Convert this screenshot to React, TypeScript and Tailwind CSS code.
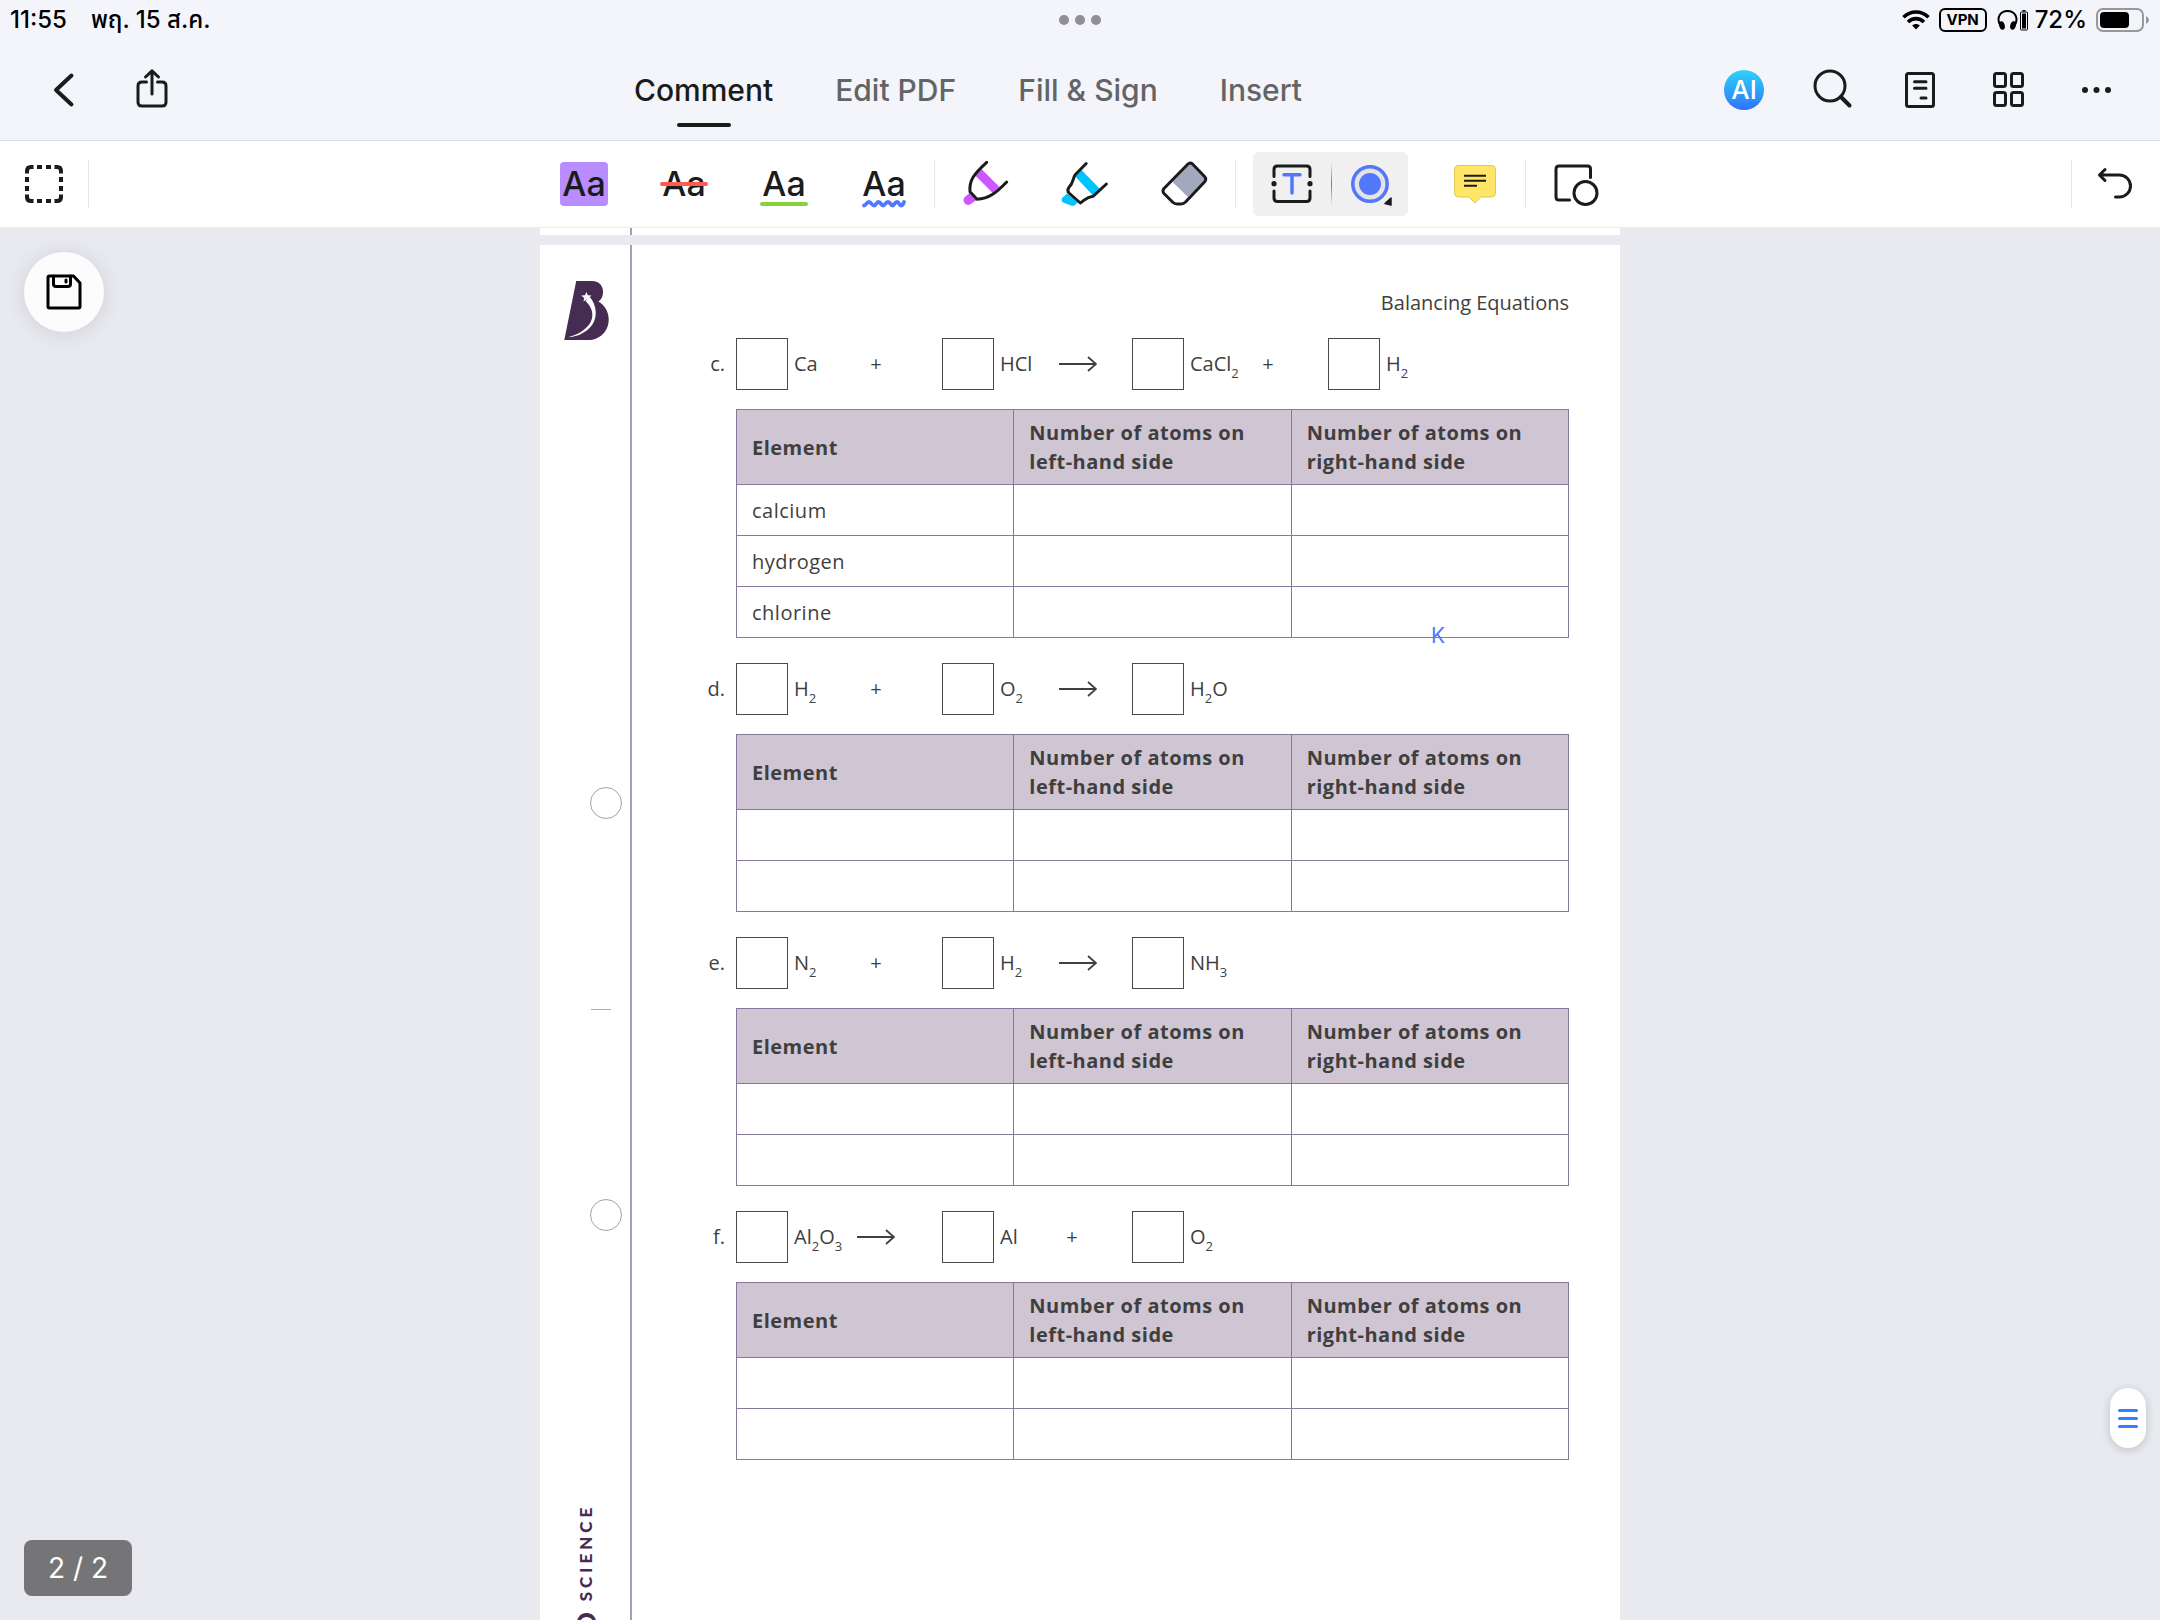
import type { ReactNode } from "react";

const INK = "#1a1c1c";

function Icon({ children, width = 3 }: { children: ReactNode; width?: number }) {
  return (
    <svg
      viewBox="0 0 48 48"
      className="size-12 shrink-0"
      fill="none"
      stroke={INK}
      strokeWidth={width}
      strokeLinecap="round"
      strokeLinejoin="round"
      aria-hidden="true"
    >
      {children}
    </svg>
  );
}

function HeaderButton({ label, children }: { label: string; children: ReactNode }) {
  return (
    <button type="button" aria-label={label} className="flex h-12 w-22 items-center justify-center">
      {children}
    </button>
  );
}

function ToolButton({ label, children }: { label: string; children: ReactNode }) {
  return (
    <button type="button" aria-label={label} className="flex h-16 w-25 items-center justify-center">
      {children}
    </button>
  );
}

function Divider() {
  return <span className="h-12 w-px bg-[#e8e8ea]" />;
}

function StatusBar() {
  return (
    <div className="grid h-10 grid-cols-3 items-center px-[10px] text-[24px] leading-7 font-medium text-black">
      <div className="flex gap-6">
        <span>11:55</span>
        <span>พฤ. 15 ส.ค.</span>
      </div>
      <div className="flex justify-center gap-[6px]">
        <span className="size-[10px] rounded-full bg-[#8e8e93]" />
        <span className="size-[10px] rounded-full bg-[#8e8e93]" />
        <span className="size-[10px] rounded-full bg-[#8e8e93]" />
      </div>
      <div className="flex items-center justify-end">
        <svg viewBox="0 0 28 20" className="h-5 w-7" fill="none" stroke="#000" strokeWidth="3.6" aria-hidden="true">
          <path d="M1.5 7.2C8.5 .2 19.5 .2 26.5 7.2" />
          <path d="M6 12C10.500 7.500 17.500 7.500 22 12" />
          <path d="M14 19.500L10.200 15.600C12.300 13.600 15.700 13.600 17.800 15.600Z" fill="#000" stroke="none" />
        </svg>
        <span className="ml-[9px] flex h-6 w-12 items-center justify-center rounded-[6px] border-2 border-black text-[15px] leading-5 font-bold">
          VPN
        </span>
        <svg viewBox="0 0 32 24" className="ml-[10px] h-6 w-8" aria-hidden="true">
          <path d="M4 19C-2 9 4 3 10.500 3S23 9 17 19" fill="none" stroke="#000" strokeWidth="2" />
          <ellipse cx="5" cy="17.500" rx="2.700" ry="4.300" fill="#000" transform="rotate(-15 5 17.500)" />
          <ellipse cx="16" cy="17.500" rx="2.700" ry="4.300" fill="#000" transform="rotate(15 16 17.500)" />
          <rect x="23.500" y="4" width="7" height="18" rx=".8" fill="none" stroke="#000" />
          <rect x="25" y="5.500" width="4" height="15" fill="#000" />
          <rect x="25.500" y="2" width="3" height="1.500" fill="#000" />
        </svg>
        <span className="ml-[6px]">72%</span>
        <svg viewBox="0 0 54 24" className="ml-[9px] h-6 w-[54px]" aria-hidden="true">
          <rect x="1" y="1" width="46" height="22" rx="6" fill="none" stroke="#97989c" strokeWidth="2" />
          <rect x="4" y="4" width="29" height="16" rx="4" fill="#000" />
          <path d="M50 8Q53 9.500 53 12T50 16Z" fill="#97989c" />
        </svg>
      </div>
    </div>
  );
}

function Tab({ label, active = false }: { label: string; active?: boolean }) {
  return (
    <button
      type="button"
      role="tab"
      aria-selected={active}
      className={
        active
          ? "relative text-[30px] leading-10 font-medium text-[#1a1c1c]"
          : "relative text-[30px] leading-10 font-medium text-[#636466]"
      }
    >
      {label}
      {active && <span className="absolute top-[53px] left-1/2 h-1 w-[54px] -translate-x-1/2 rounded-full bg-[#1a1c1c]" />}
    </button>
  );
}

function HeaderBar() {
  return (
    <div className="grid h-25 grid-cols-[1fr_auto_1fr] items-center px-5">
      <div className="flex">
        <HeaderButton label="Back">
          <Icon width={4}>
            <path d="M31.500 9.500L16 24L31.500 38.500" />
          </Icon>
        </HeaderButton>
        <HeaderButton label="Share">
          <Icon>
            <path d="M24 28V5.500M17.500 11L24 4.800L30.500 11" />
            <path d="M18.500 16H14Q10 16 10 20V36Q10 40 14 40H34Q38 40 38 36V20Q38 16 34 16H29.500" />
          </Icon>
        </HeaderButton>
      </div>
      <div role="tablist" className="mr-[224px] flex gap-[62px]">
        <Tab label="Comment" active />
        <Tab label="Edit PDF" />
        <Tab label="Fill &amp; Sign" />
        <Tab label="Insert" />
      </div>
      <div className="flex justify-end">
        <HeaderButton label="AI assistant">
          <span className="flex size-10 items-center justify-center rounded-full bg-linear-to-b from-[#30d2f8] to-[#3272f8] text-[26px] leading-8 font-medium text-white">
            AI
          </span>
        </HeaderButton>
        <HeaderButton label="Search">
          <Icon>
            <circle cx="22" cy="20" r="15" />
            <path d="M33 31L41.500 39.500" strokeWidth="4" />
          </Icon>
        </HeaderButton>
        <HeaderButton label="Page view">
          <Icon>
            <rect x="10.500" y="7.500" width="27" height="33" rx="2" />
            <path d="M18.500 15.800H30M18.500 22.200H30M25 32H30" />
          </Icon>
        </HeaderButton>
        <HeaderButton label="Thumbnails">
          <Icon>
            <rect x="10.500" y="7.500" width="11" height="13" rx="2" />
            <rect x="27.500" y="7.500" width="11" height="13" rx="2" />
            <rect x="10.500" y="26.500" width="11" height="13" rx="2" />
            <rect x="27.500" y="26.500" width="11" height="13" rx="2" />
          </Icon>
        </HeaderButton>
        <HeaderButton label="More">
          <Icon>
            <g fill={INK} stroke="none">
              <circle cx="13" cy="24" r="3" />
              <circle cx="24.500" cy="24" r="3" />
              <circle cx="36" cy="24" r="3" />
            </g>
          </Icon>
        </HeaderButton>
      </div>
    </div>
  );
}

function Toolbar() {
  return (
    <div className="grid h-[87px] grid-cols-[1fr_auto_1fr] items-center border-b border-[#e9eaef] bg-white text-[#1a1c1c]">
      <div className="flex items-center">
        <button type="button" aria-label="Select area" className="flex h-16 w-22 items-center justify-center">
          <Icon width={4}>
            <g strokeLinecap="butt">
              <path d="M13.500 7H11Q7 7 7 11V13.500M34.500 7H37Q41 7 41 11V13.500M7 34.500V37Q7 41 11 41H13.500M41 34.500V37Q41 41 37 41H34.500" />
              <path d="M17 7H22M26 7H31M17 41H22M26 41H31M7 17V22M7 26V31M41 17V22M41 26V31" />
            </g>
          </Icon>
        </button>
        <Divider />
      </div>

      <div className="flex items-center">
        <ToolButton label="Highlight text">
          <span className="flex h-11 w-12 items-center justify-center rounded-[4px] bg-[#b98cff] text-[34px] leading-10 font-medium">
            Aa
          </span>
        </ToolButton>
        <ToolButton label="Strikethrough text">
          <span className="relative flex h-11 w-12 items-center justify-center text-[34px] leading-10 font-medium">
            Aa
            <span className="absolute top-[20px] left-0 h-1 w-12 rounded-full bg-[#ff5b50]" />
          </span>
        </ToolButton>
        <ToolButton label="Underline text">
          <span className="relative flex h-11 w-12 items-center justify-center text-[34px] leading-10 font-medium">
            Aa
            <span className="absolute bottom-0 left-0 h-1 w-12 rounded-full bg-[#86d13f]" />
          </span>
        </ToolButton>
        <ToolButton label="Squiggly underline text">
          <span className="relative flex h-11 w-12 items-center justify-center text-[34px] leading-10 font-medium">
            Aa
            <svg viewBox="0 0 44 8" className="absolute -bottom-[2px] left-[2px] h-2 w-11" fill="none" aria-hidden="true">
              <path
                d="M2 5.500C4 5.500 4.500 2 7 2S9.500 5.500 12 5.500S14 2 16.500 2S19 5.500 21 5.500S23.500 2 26 2S28.500 5.500 30.500 5.500S32.500 2 35 2S37 5.500 39 5.500S41.500 3 42 2"
                stroke="#5377fa"
                strokeWidth="3.800"
                strokeLinecap="round"
              />
            </svg>
          </span>
        </ToolButton>
        <Divider />
        <ToolButton label="Pencil">
          <Icon>
            <path d="M20.500 9L14.300 15.500L31.700 33L38.500 27Z" fill="#cf57ff" stroke="none" />
            <path d="M8.500 33L3.800 37A4.600 4.600 0 0 0 10.500 43.500L15.500 40Z" fill="#cf57ff" stroke="none" />
            <path d="M25.700 2.300C13 14 8 20 9 31.700L16 39.200C28 39 36 32 45.700 22" />
          </Icon>
        </ToolButton>
        <ToolButton label="Marker">
          <Icon>
            <path d="M20.500 10L14.300 16.500L32 35.500L39 29Z" fill="#00c4ff" stroke="none" />
            <path d="M6 33.500L1 38Q0 41.500 2 42.500L11.500 46Q14 46 16.500 42.500Z" fill="#00c4ff" stroke="none" />
            <path d="M25.200 3.500L14 15C11.500 19 13 22 7.500 28Q6 31 8 33L19.300 43C24 40 25 37 32 36.300L45.400 24" />
          </Icon>
        </ToolButton>
        <ToolButton label="Eraser">
          <Icon>
            <path d="M29 3.500L45 19.500L27 37L11.500 22Z" fill="#a3a9bd" stroke="none" />
            <path d="M27 4Q29 2 31.500 4L43.500 16.500Q46 19 43.500 22L24.500 42Q22.500 44 20 44H16Q13.500 44 11.500 42L3 33.500Q1 31 3 28.500Z" />
          </Icon>
        </ToolButton>
        <Divider />
        <div className="mx-[17px] flex h-16 items-center rounded-[6px] bg-[#f0f0f1]">
          <button type="button" aria-label="Text box" aria-pressed="true" className="flex h-16 w-[78px] items-center justify-center">
            <Icon>
              <path d="M6 16.500V9.500Q6 6 9.500 6H38.500Q42 6 42 9.500V16.500M6 31V38Q6 41.500 9.500 41.500H38.500Q42 41.500 42 38V31" />
              <circle cx="6" cy="23.700" r="2.600" fill={INK} stroke="none" />
              <circle cx="42" cy="23.700" r="2.600" fill={INK} stroke="none" />
              <path d="M16 14.700H32M24 14.700V33" stroke="#5377fa" strokeWidth="3.500" />
            </Icon>
          </button>
          <span className="h-11 w-px bg-linear-to-b from-transparent via-[#5377fa] to-transparent" />
          <button type="button" aria-label="Text colour" className="flex h-16 w-[76px] items-center justify-center">
            <Icon>
              <circle cx="24" cy="24" r="17.200" fill="#e4e4e6" stroke="#5377fa" strokeWidth="3.500" />
              <circle cx="24" cy="24" r="11" fill="#5377fa" stroke="none" />
              <path d="M45 38L39 43.500L45 45Z" fill={INK} strokeWidth="1.500" />
            </Icon>
          </button>
        </div>
        <ToolButton label="Note">
          <Icon>
            <path
              d="M7.500 5.500H40.500Q44.500 5.500 44.500 9.500V33Q44.500 37 40.500 37H30L24 43L18 37H7.500Q3.500 37 3.500 33V9.500Q3.500 5.500 7.500 5.500Z"
              fill="#ffe666"
              stroke="#ddc95a"
              strokeWidth="1"
            />
            <path d="M13 15.800H35M13 20.800H35M13 25.800H26" strokeWidth="2" strokeLinecap="butt" />
          </Icon>
        </ToolButton>
        <Divider />
        <ToolButton label="Shapes">
          <Icon>
            <path d="M38.500 17.500V9Q38.500 6 35.500 6H7Q4 6 4 9V37Q4 40 7 40H17.500" />
            <circle cx="33.500" cy="33" r="11.500" />
          </Icon>
        </ToolButton>
      </div>

      <div className="flex items-center justify-end">
        <Divider />
        <button type="button" aria-label="Undo" className="flex h-16 w-22 items-center justify-center">
          <Icon>
            <path d="M13 9.500L7.500 15L13 20.500M8 15H27.500A11 11 0 0 1 27.500 37H23.500" />
          </Icon>
        </button>
      </div>
    </div>
  );
}

function Arrow() {
  return (
    <svg viewBox="0 0 38 16" className="h-4 w-[38px]" fill="none" stroke="#3f3f3f" strokeWidth="1.800" aria-label="yields">
      <path d="M0 8H36.500M29 1L37 8L29 15" />
    </svg>
  );
}

type Term = { formula: ReactNode; formulaWidth?: string; op?: "+" | "arrow"; opWidth?: string };
type Question = { label: string; terms: Term[]; rows: string[] };

const WIDE = "w-[63px]";
const NARROW = "w-[59px]";

function Sub({ children }: { children: ReactNode }) {
  return <span className="relative top-[7px] text-[13px] leading-4">{children}</span>;
}

const questions: Question[] = [
  {
    label: "c.",
    terms: [
      { formula: "Ca", formulaWidth: WIDE, op: "+" },
      { formula: "HCl", op: "arrow" },
      { formula: <>CaCl<Sub>2</Sub></>, op: "+" },
      { formula: <>H<Sub>2</Sub></> },
    ],
    rows: ["calcium", "hydrogen", "chlorine"],
  },
  {
    label: "d.",
    terms: [
      { formula: <>H<Sub>2</Sub></>, formulaWidth: WIDE, op: "+" },
      { formula: <>O<Sub>2</Sub></>, op: "arrow" },
      { formula: <>H<Sub>2</Sub>O</> },
    ],
    rows: ["", ""],
  },
  {
    label: "e.",
    terms: [
      { formula: <>N<Sub>2</Sub></>, formulaWidth: WIDE, op: "+" },
      { formula: <>H<Sub>2</Sub></>, op: "arrow" },
      { formula: <>NH<Sub>3</Sub></> },
    ],
    rows: ["", ""],
  },
  {
    label: "f.",
    terms: [
      { formula: <>Al<Sub>2</Sub>O<Sub>3</Sub></>, formulaWidth: WIDE, op: "arrow" },
      { formula: "Al", op: "+", opWidth: "w-[26px]" },
      { formula: <>O<Sub>2</Sub></> },
    ],
    rows: ["", ""],
  },
];

function Equation({ label, terms }: { label: string; terms: Term[] }) {
  return (
    <div className="flex h-13 items-center">
      <span className="w-26 pr-[11px] text-right">{label}</span>
      <div className="grid grid-cols-[206px_190px_196px_auto]">
        {terms.map((term, i) => (
          <div key={i} className="flex items-center">
            <span className="size-13 border border-[#4a4a4a]" />
            <span className={`ml-[6px] whitespace-nowrap ${term.formulaWidth ?? NARROW}`}>{term.formula}</span>
            {term.op && (
              <span className={`flex justify-center ${term.opWidth ?? "w-[38px]"}`}>
                {term.op === "+" ? "+" : <Arrow />}
              </span>
            )}
          </div>
        ))}
      </div>
    </div>
  );
}

function AtomTable({ rows }: { rows: string[] }) {
  const head = "h-[75px] border border-[#85789a] pl-[15px] text-left align-middle font-bold";
  const cell = "h-[51px] border border-[#85789a] pl-[15px]";
  return (
    <div className="pl-26">
      <table className="w-full table-fixed border-collapse text-[20px] leading-[29px] tracking-wide">
        <thead className="bg-[#d0c5d3]">
          <tr>
            <th className={head}>Element</th>
            <th className={head}>
              Number of atoms on
              <br />
              left-hand side
            </th>
            <th className={head}>
              Number of atoms on
              <br />
              right-hand side
            </th>
          </tr>
        </thead>
        <tbody>
          {rows.map((name, i) => (
            <tr key={i}>
              <td className={cell}>{name}</td>
              <td className={cell} />
              <td className={cell} />
            </tr>
          ))}
        </tbody>
      </table>
    </div>
  );
}

function Logo() {
  return (
    <svg viewBox="0 0 134 178" className="ml-6 h-[59px] w-[45px]" aria-label="Beyond">
      <path
        d="M36 0H84C104 0 117 14 117 33C117 47 111 56 103 62C122 73 134 93 134 116C134 151 108 178 72 178H0Z"
        fill="#462b53"
      />
      <path d="M64 60C88 82 96 116 62 145C50 155 34 164 12 170C38 168 60 158 76 142C106 112 96 70 77 48Z" fill="#fff" />
      <path d="M67 33L71 43L82 44L74 51L77 62L67 56L58 62L60 51L51 44L62 43Z" fill="#fff" />
    </svg>
  );
}

function Margin() {
  return (
    <div className="flex w-[90px] shrink-0 flex-col pt-9">
      <Logo />
      <span className="mt-[447px] ml-[50px] size-8 rounded-full border border-[#a3a3a3]" />
      <span className="mt-[190px] ml-[51px] h-px w-5 bg-[#b5a9bc]" />
      <span className="mt-[189px] ml-[50px] size-8 rounded-full border border-[#a3a3a3]" />
      <div className="mt-[273px] ml-[30px] flex w-8 rotate-180 items-center gap-2 font-['Lato'] leading-8 font-black text-[#462b53] [writing-mode:vertical-rl]">
        <span className="text-[26px] tracking-widest">BEYOND</span>
        <span className="text-[17px] tracking-[4px]">SCIENCE</span>
      </div>
    </div>
  );
}

function Worksheet() {
  return (
    <article className="relative mt-[10px] flex w-1/2 shrink-0 bg-white font-['Open_Sans','Noto_Sans',sans-serif] text-[20px] leading-7 text-[#3f3f3f]">
      <Margin />
      <div className="flex-1 border-l-2 border-[#a99db6] pt-11 pr-[51px]">
        <h1 className="mb-[21px] text-right">Balancing Equations</h1>
        <div className="flex flex-col gap-[25px]">
          {questions.map((q) => (
            <section key={q.label} className="flex flex-col gap-[19px]">
              <Equation label={q.label} terms={q.terms} />
              <AtomTable rows={q.rows} />
            </section>
          ))}
        </div>
      </div>
      <span className="absolute top-[377px] left-[891px] font-['Inter'] text-[21px] leading-7 text-[#5377fa]">K</span>
    </article>
  );
}

export default function App() {
  return (
    <div className="flex h-screen flex-col overflow-hidden bg-[#e9eaef] font-['Inter','Noto_Sans_Thai','Noto_Sans',sans-serif]">
      <header>
        <div className="border-b border-[#dadbe0] bg-[#f4f5fa]">
          <StatusBar />
          <HeaderBar />
        </div>
        <Toolbar />
      </header>

      <main className="relative flex min-h-0 flex-1 flex-col items-center overflow-hidden">
        <div className="flex h-[7px] w-1/2 shrink-0 bg-white">
          <span className="ml-[90px] w-[2px] bg-[#a99db6]" />
        </div>
        <Worksheet />

        <button
          type="button"
          aria-label="Save"
          className="absolute top-6 left-6 flex size-20 items-center justify-center rounded-full bg-[#fcfcfc] shadow-[0_2px_20px_rgba(60,60,90,0.14)]"
        >
          <Icon>
            <g stroke="#000">
              <path d="M8 9.500Q8 8 9.500 8H33.500L40 15V38.500Q40 40 38.500 40H9.500Q8 40 8 38.500Z" />
              <path d="M13.500 8V16Q13.500 18.500 16 18.500H28Q30.500 18.500 30.500 16V8M26 12V14" />
            </g>
          </Icon>
        </button>

        <div className="absolute bottom-6 left-6 rounded-[8px] bg-[#757577] px-6 py-2 text-[28px] leading-10 text-white">
          2 / 2
        </div>

        <button
          type="button"
          aria-label="Scroll handle"
          className="absolute right-[14px] bottom-[172px] flex h-15 w-9 flex-col items-center justify-center gap-[5px] rounded-full bg-white shadow-[0_2px_10px_rgba(0,0,0,0.18)]"
        >
          <span className="h-[3px] w-5 rounded-full bg-[#3381fa]" />
          <span className="h-[3px] w-5 rounded-full bg-[#3381fa]" />
          <span className="h-[3px] w-5 rounded-full bg-[#3381fa]" />
        </button>
      </main>
    </div>
  );
}
